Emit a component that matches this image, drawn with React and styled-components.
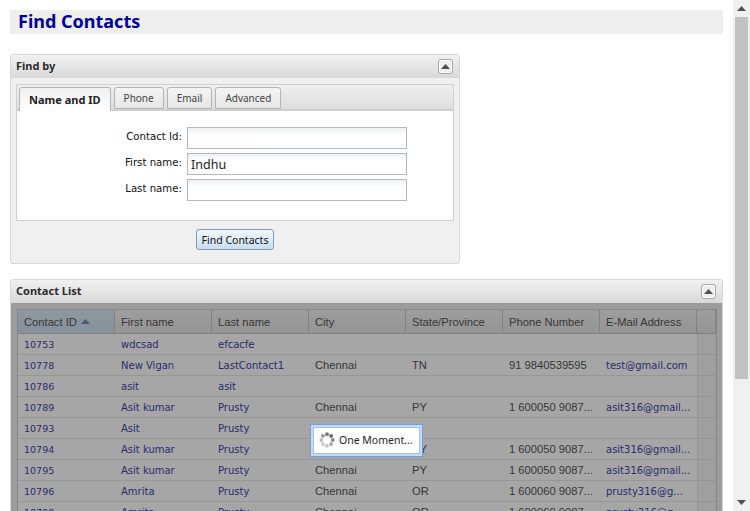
import React from 'react';
import styled, { createGlobalStyle } from 'styled-components';

const Global = createGlobalStyle`
  html, body { margin: 0; padding: 0; height: 511px; overflow: hidden; background: #fff; }
  * { box-sizing: border-box; }
  #root { height: 511px; }
`;
const tahoma = `"Noto Sans", Tahoma, sans-serif`;
const verdana = `"DejaVu Sans", Verdana, sans-serif`;
const arial = `"Liberation Sans", Arial, sans-serif`;

const Page = styled.div`display: flex; height: 511px; overflow: hidden;`;
const Main = styled.main`flex: 1; min-width: 0; padding: 10px 10px 0; display: flex; flex-direction: column;`;
const Title = styled.h1`
  flex: none; margin: 0 0 20px; height: 24px; padding-left: 8px; background: #eeeeee; color: #00009c;
  font: bold 18px/22px ${tahoma};
`;
const Panel = styled.section`
  border: 1px solid #d8d8d8; border-radius: 3px; background: #f0f0f0;
  width: ${p => p.$width}; margin-bottom: 15px; position: relative; flex: 0 0 auto;
`;
const PanelHead = styled.header`
  height: 23px; padding: 0 6px 1px 5px; display: flex; align-items: center; justify-content: space-between;
  background: linear-gradient(#f1f1f1, #d9d9d9);
  font: bold 11px ${tahoma}; color: #2c2c2c;
`;
const PanelTitle = styled.span`padding-bottom: 2px;`;
const Collapse = styled.button`
  width: 15px; height: 15px; padding: 0; border: 1px solid #a4a4a4; border-radius: 3px; background: #eee;
  box-shadow: inset 0 0 0 1px #fff; display: flex; align-items: center; justify-content: center;
  svg { display: block; }
`;
const PanelBody = styled.div`padding: 6px 5px 13px;`;
const Tabs = styled.div`border: 1px solid #cfcfcf; background: #fff;`;
const TabBar = styled.div`
  height: 26px; padding: 3px 0 0 2px; display: flex; gap: 3px; align-items: flex-end;
  background: linear-gradient(#efefef, #dedede); border-bottom: 2px solid #cfcfcf;
`;
const Tab = styled.div`
  height: ${p => p.$active ? '24px' : '22px'}; margin-bottom: ${p => p.$active ? '-2px' : '0'};
  padding: 0 9px; display: flex; align-items: center;
  border: 1px solid #b4b4b4; border-bottom: ${p => p.$active ? 'none' : '1px solid #b4b4b4'}; border-radius: 3px 3px 0 0;
  background: ${p => p.$active ? 'linear-gradient(#f0f0f0, #fff)' : 'linear-gradient(#f4f4f4, #e6e6e6)'};
  font: ${p => p.$active ? 'bold 11px' : 'normal 10px'} ${tahoma}; color: ${p => p.$active ? '#222' : '#444'};
`;
const Form = styled.div`
  padding: 16px 0 18px; height: 109px; display: grid; grid-template-columns: 165px 220px;
  column-gap: 5px; row-gap: 4px; align-content: start;
`;
const Label = styled.label`font: 10.2px/20px ${verdana}; color: #111; text-align: right;`;
const Input = styled.div`
  height: 22px; border: 1px solid #b2b6c8; padding-left: 3px;
  background: linear-gradient(#eef0f2, #fff 7px);
  font: 12.5px/21px ${tahoma}; color: #222;
`;
const Actions = styled.div`display: flex; justify-content: center; padding-top: 8px;`;
const Button = styled.button`
  width: 78px; height: 21px; padding: 0; border: 1px solid #7f9db9; border-radius: 3px;
  background: linear-gradient(#f3f7fb, #c9def2); font: 10.5px ${tahoma}; color: #111;
`;
const ListBody = styled.div`
  position: relative; padding: 6px 5px 0 6px; height: 300px; background: #f0f0f0; overflow: hidden;
`;
const Grid = styled.div`
  border: 1px solid #cfcfcf; background: #fff; display: grid;
  grid-template-columns: 97px 97px 97px 97px 97px 97px 97px 1fr;
`;
const HeadCell = styled.div`
  height: 24px; padding: 0 0 0 6px; border-right: 1px solid #c6c6c6; border-bottom: 1px solid #c6c6c6;
  background: ${p => p.$sorted ? 'linear-gradient(#dbe9f5, #cddff0)' : 'linear-gradient(#f2f2f2, #e4e4e4)'};
  font: 11.2px/20px ${arial}; color: #555; display: flex; align-items: center; gap: 4px;
`;
const Cell = styled.div`
  height: 21px; padding-left: 6px; border-bottom: 1px solid #e6e6e6; overflow: hidden; white-space: nowrap;
  background: #fff; line-height: ${p => p.$link ? '22px' : '20px'};
  font-family: ${p => p.$link ? verdana : arial};
  font-size: ${p => p.$id ? '9.5px' : p.$link ? '10px' : '11.2px'};
  color: ${p => p.$link ? '#4444a8' : '#555'};
`;
const ScrollGutter = styled.div`border-left: 1px solid #e3e3e3; border-bottom: 1px solid #e3e3e3; background: #f4f4f4;`;
const Overlay = styled.div`position: absolute; inset: 0; background: rgba(0,0,0,.35);`;
const Loading = styled.div`
  position: absolute; left: 299px; top: 121px; width: 113px; height: 33px; padding: 2px;
  border: 1px solid #6f9fe0; background: #c5d9f5;
`;
const LoadingInner = styled.div`
  height: 100%; background: #fff; border: 1px solid #a5c0e6; display: flex; align-items: center; gap: 4px; padding: 0 0 1px 5px;
  font: 10.5px ${tahoma}; color: #222; white-space: nowrap;
`;
const Scrollbar = styled.aside`
  width: 17px; height: 511px; background: #f0f0f0; display: flex; flex-direction: column; align-items: center; padding: 0 2px;
`;
const ScrollArrow = styled.div`height: 17px; display: flex; align-items: center; justify-content: center; flex: none;`;
const Thumb = styled.div`width: 13px; height: 362px; background: #c2c2c2; flex: none;`;
const Spacer = styled.div`flex: 1;`;

const Up = ({ c = '#505050' }) => <svg width="9" height="5" viewBox="0 0 9 5"><path d="M4.5 0 9 5H0z" fill={c}/></svg>;
const Down = () => <svg width="9" height="5" viewBox="0 0 9 5"><path d="M0 0h9L4.5 5z" fill="#505050"/></svg>;
const Spinner = () => (
  <svg width="16" height="16" viewBox="0 0 16 16">
    {[0,45,90,135,180,225,270,315].map((a, i) => (
      <circle key={a} cx="8" cy="2.2" r="1.9" fill={['#777','#666','#888','#aaa','#c4c4c4','#d0d0d0','#bbb','#999'][i]} transform={`rotate(${a} 8 8)`}/>
    ))}
  </svg>
);

const cols = ['First name','Last name','City','State/Province','Phone Number','E-Mail Address'];
const phone = '1 600050 9087...';
const mail = 'asit316@gmail...';
const rows = [
  ['10753','wdcsad','efcacfe','','','',''],
  ['10778','New Vigan','LastContact1','Chennai','TN','91 9840539595','test@gmail.com'],
  ['10786','asit','asit','','','',''],
  ['10789','Asit kumar','Prusty','Chennai','PY',phone,mail],
  ['10793','Asit','Prusty','','','',''],
  ['10794','Asit kumar','Prusty','Chennai','PY',phone,mail],
  ['10795','Asit kumar','Prusty','Chennai','PY',phone,mail],
  ['10796','Amrita','Prusty','Chennai','OR','1 600060 9087...','prusty316@g...'],
  ['10798','Amrita','Prusty','Chennai','OR','1 600060 9087...','prusty316@g...'],
];

export default function App() {
  return (
    <Page>
      <Global />
      <Main>
        <Title>Find Contacts</Title>
        <Panel $width="450px">
          <PanelHead><PanelTitle>Find by</PanelTitle><Collapse><Up /></Collapse></PanelHead>
          <PanelBody>
            <Tabs>
              <TabBar>
                <Tab $active>Name and ID</Tab><Tab>Phone</Tab><Tab>Email</Tab><Tab>Advanced</Tab>
              </TabBar>
              <Form>
                <Label>Contact Id:</Label><Input />
                <Label>First name:</Label><Input>Indhu</Input>
                <Label>Last name:</Label><Input />
              </Form>
            </Tabs>
            <Actions><Button>Find Contacts</Button></Actions>
          </PanelBody>
        </Panel>
        <Panel $width="713px">
          <PanelHead><PanelTitle>Contact List</PanelTitle><Collapse><Up /></Collapse></PanelHead>
          <ListBody>
            <Grid>
              <HeadCell $sorted>Contact ID <Up c="#6f8fb5" /></HeadCell>
              {cols.map(c => <HeadCell key={c}>{c}</HeadCell>)}
              <HeadCell />
              {rows.map(r => (
                <React.Fragment key={r[0]}>
                  <Cell $link $id>{r[0]}</Cell><Cell $link>{r[1]}</Cell><Cell $link>{r[2]}</Cell>
                  <Cell>{r[3]}</Cell><Cell>{r[4]}</Cell><Cell>{r[5]}</Cell><Cell $link>{r[6]}</Cell>
                  <ScrollGutter />
                </React.Fragment>
              ))}
            </Grid>
            <Overlay />
            <Loading><LoadingInner><Spinner />One Moment...</LoadingInner></Loading>
          </ListBody>
        </Panel>
      </Main>
      <Scrollbar>
        <ScrollArrow><Up /></ScrollArrow>
        <Thumb />
        <Spacer />
        <ScrollArrow><Down /></ScrollArrow>
      </Scrollbar>
    </Page>
  );
}
